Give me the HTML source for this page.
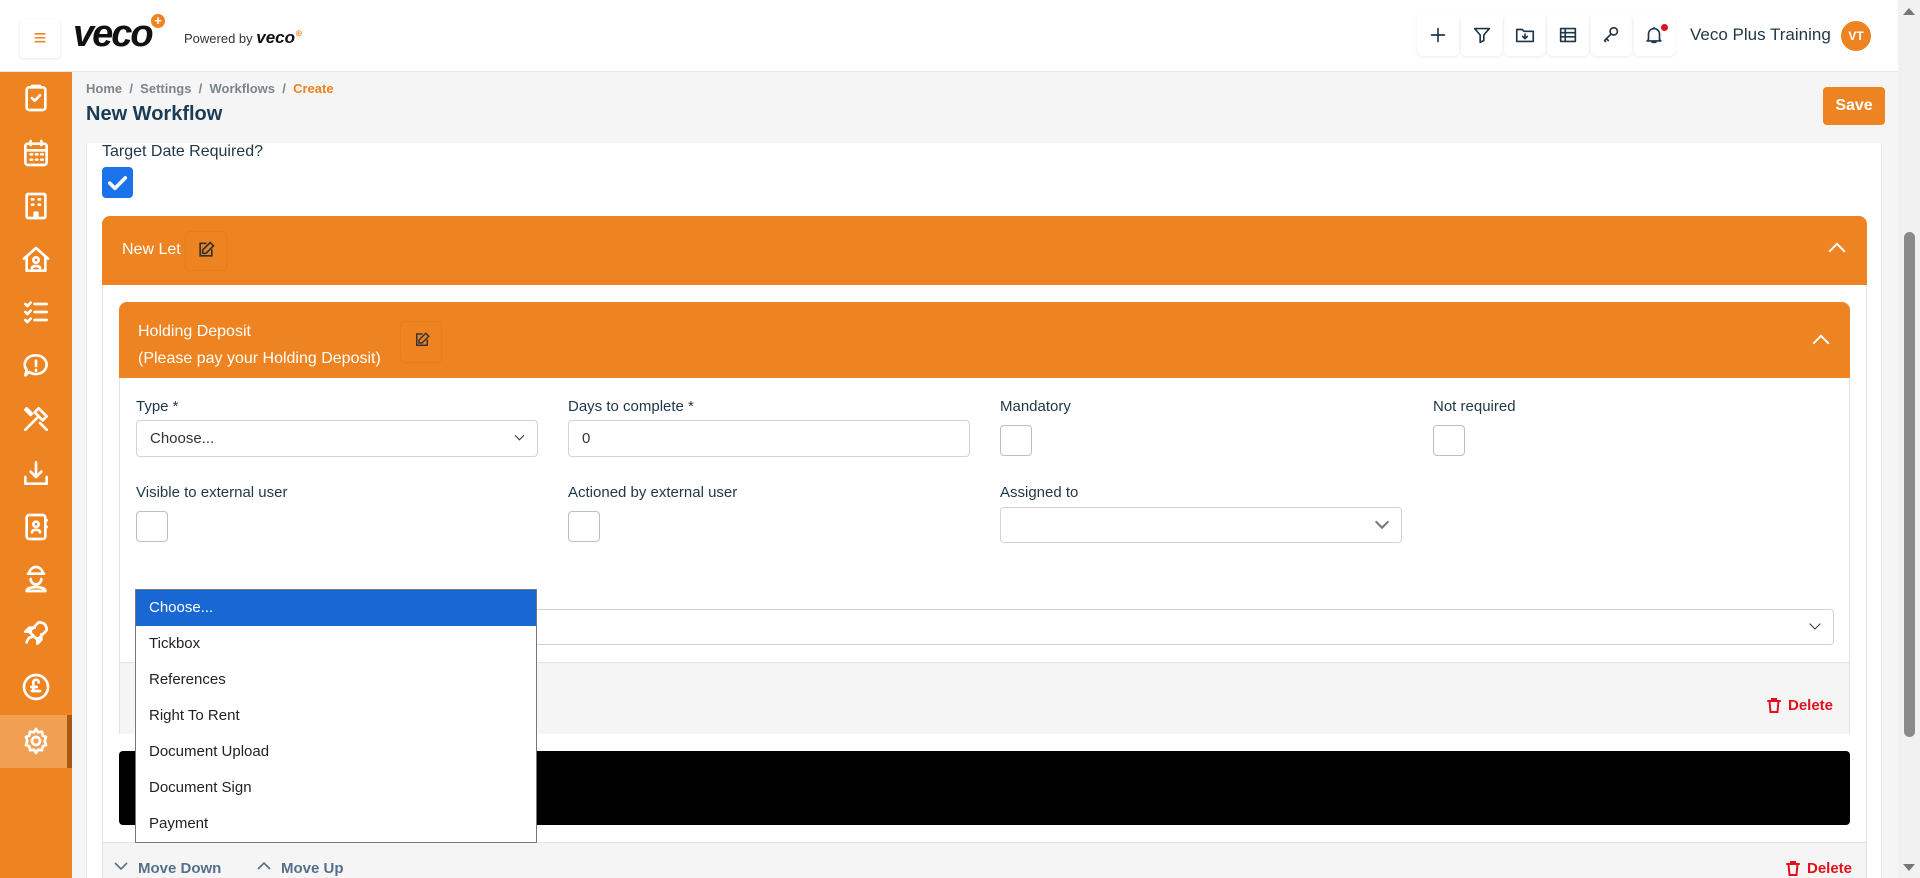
<!DOCTYPE html>
<html><head><meta charset="utf-8"><style>
*{box-sizing:border-box;margin:0;padding:0}
body{width:1920px;height:878px;overflow:hidden;background:#f5f5f5;font-family:"Liberation Sans",sans-serif;color:#1f3747;position:relative;font-size:15px}
.a{position:absolute}
.hdr{left:0;top:0;width:1898px;height:72px;background:#fff;border-bottom:1px solid #e8e8e8}
.side{left:0;top:72px;width:72px;height:806px;background:#ee8321}
.ic{position:absolute;left:20px;width:32px;height:32px}
.ic svg{width:32px;height:32px;fill:none;stroke:#fff;stroke-width:2;stroke-linecap:round;stroke-linejoin:round}
.tb{position:absolute;top:14px;width:42px;height:42px;border-radius:6px;box-shadow:0 1px 3px rgba(0,0,0,.08);display:flex;align-items:center;justify-content:center}
.tb svg{width:22px;height:22px;fill:none;stroke:#1f3747;stroke-width:1.8;stroke-linecap:round;stroke-linejoin:round}
.lbl{font-size:15px;color:#1f3747}
.inp{background:#fff;border:1px solid #cfd4d8;border-radius:4px}
.cb{background:#fff;border:1px solid #b9c0c6;border-radius:4px;width:32px;height:31px}
.chev{position:absolute;right:14px;top:12px;width:9px;height:9px;border-right:1.6px solid #333;border-bottom:1.6px solid #333;transform:rotate(45deg)}
.dd div{height:36px;line-height:36px;padding-left:13px;font-size:15px;color:#222}
.del{color:#e0101d;font-weight:bold;font-size:15px;display:flex;align-items:center;gap:6px}
.del svg{width:16px;height:17px;fill:none;stroke:#e0101d;stroke-width:2;stroke-linecap:round}
.mv{color:#55708a;font-weight:bold;font-size:15px}
</style></head><body>
<div class="a hdr">
  <div class="a" style="left:20px;top:20px;width:40px;height:38px;border-radius:4px;box-shadow:0 1px 3px rgba(0,0,0,.1);color:#ee8321;font-size:22px;text-align:center;line-height:36px">≡</div>
  <div class="a" style="left:73px;top:13px;font-size:38px;font-weight:bold;font-style:italic;color:#111;letter-spacing:-2px">veco</div>
  <div class="a" style="left:151px;top:14px;width:14px;height:14px;border-radius:50%;background:#ee8321;color:#fff;font-size:13px;line-height:14px;text-align:center;font-weight:bold">+</div>
  <div class="a" style="left:184px;top:28px;font-size:13px;color:#333">Powered by <b style="font-style:italic;font-size:17px;color:#111">veco</b><span style="color:#ee8321;font-size:9px;vertical-align:top">⊕</span></div>
  <div class="tb" style="left:1417px"><svg viewBox="0 0 24 24"><path d="M12 5v14M5 12h14"/></svg></div>
  <div class="tb" style="left:1461px"><svg viewBox="0 0 24 24"><path d="M4 5h16l-6 7v6l-4 2v-8z"/></svg></div>
  <div class="tb" style="left:1504px"><svg viewBox="0 0 24 24"><path d="M3 6h6l2 2h10v11H3z M12 11v5M9.5 13.5 12 16l2.5-2.5"/></svg></div>
  <div class="tb" style="left:1547px"><svg viewBox="0 0 24 24"><rect x="4" y="5" width="16" height="14"/><path d="M4 9.5h16M4 14h16M9 5v14"/></svg></div>
  <div class="tb" style="left:1590px"><svg viewBox="0 0 24 24"><circle cx="15" cy="8" r="4"/><path d="M12 11l-7 7M7 16l2 2M5 18l1 1"/></svg></div>
  <div class="tb" style="left:1633px"><svg viewBox="0 0 24 24"><path d="M6 17V11a6 6 0 0 1 12 0v6l1.5 1.5h-15zM10 20h4M12 4v1"/></svg></div>
  <div class="a" style="left:1661px;top:24px;width:7px;height:7px;border-radius:50%;background:#e0101d"></div>
  <div class="a" style="left:1690px;top:25px;font-size:17px;color:#1f3747">Veco Plus Training</div>
  <div class="a" style="left:1841px;top:21px;width:30px;height:30px;border-radius:50%;background:#ee8321;color:#fff;font-size:12px;font-weight:bold;text-align:center;line-height:30px">VT</div>
</div>
<div class="a" style="left:1898px;top:0;width:22px;height:878px;background:#f1f1f1"></div>
<div class="a" style="left:1904px;top:232px;width:11px;height:505px;border-radius:6px;background:#8a8a8a"></div>
<div class="a" style="left:1903px;top:8px;width:0;height:0;border-left:6px solid transparent;border-right:6px solid transparent;border-bottom:7px solid #777"></div>
<div class="a" style="left:1903px;top:864px;width:0;height:0;border-left:6px solid transparent;border-right:6px solid transparent;border-top:7px solid #777"></div>

<div class="a side">
  <div class="a" style="left:0;top:643px;width:72px;height:53px;background:#f19f52;border-right:5px solid #a85a14"></div>
  <div class="ic" style="top:10px"><svg viewBox="0 0 24 24"><rect x="5" y="4" width="14" height="17" rx="2"/><path d="M9 4V3h6v1M9 12l2 2 4-4"/></svg></div>
  <div class="ic" style="top:65px"><svg viewBox="0 0 24 24"><rect x="4" y="5" width="16" height="16" rx="2"/><path d="M4 10h16M8 3v3M16 3v3M8 13h1M12 13h1M16 13h1M8 17h1M12 17h1M16 17h1"/></svg></div>
  <div class="ic" style="top:118px"><svg viewBox="0 0 24 24"><rect x="5" y="3" width="14" height="18" rx="1"/><path d="M9 7h1M14 7h1M9 11h1M14 11h1M11 21v-4h2v4"/></svg></div>
  <div class="ic" style="top:172px"><svg viewBox="0 0 24 24"><path d="M3 11l9-8 9 8M5 10v10h14V10"/><circle cx="12" cy="12" r="2"/><path d="M9 18c0-2 6-2 6 0"/></svg></div>
  <div class="ic" style="top:224px"><svg viewBox="0 0 24 24"><path d="M4 6l1.5 1.5L8 5M4 12l1.5 1.5L8 11M4 18l1.5 1.5L8 17M11 6h9M11 12h9M11 18h9"/></svg></div>
  <div class="ic" style="top:278px"><svg viewBox="0 0 24 24"><path d="M12 4a8 7 0 1 1-5 12.5L4 19l1-4A8 7 0 0 1 12 4zM12 8v4M12 15v.5"/></svg></div>
  <div class="ic" style="top:331px"><svg viewBox="0 0 24 24"><path d="M4 20l9-9M14 4l6 6-3 3-6-6zM5 4l4 4M4 5l4 4M15 15l5 5"/></svg></div>
  <div class="ic" style="top:385px"><svg viewBox="0 0 24 24"><path d="M12 4v11M8 11l4 4 4-4M4 15v5h16v-5"/></svg></div>
  <div class="ic" style="top:439px"><svg viewBox="0 0 24 24"><rect x="5" y="3" width="14" height="18" rx="2"/><circle cx="12" cy="10" r="2"/><path d="M9 16c0-2.5 6-2.5 6 0M19 7h1M19 12h1"/></svg></div>
  <div class="ic" style="top:491px"><svg viewBox="0 0 24 24"><path d="M7 8a5 5 0 0 1 10 0zM6 8h12M8 12a4 4 0 0 0 8 0M5 21c0-4 14-4 14 0z"/></svg></div>
  <div class="ic" style="top:545px"><svg viewBox="0 0 24 24"><path d="M5 19c1-3 2-4 4-4M14 4c4 0 6 2 6 6l-7 7-6-6z M8 11H4l3-3h4M13 16v4l3-3v-4"/></svg></div>
  <div class="ic" style="top:599px"><svg viewBox="0 0 24 24"><circle cx="12" cy="12" r="9"/><path d="M14 8.5a2 2 0 0 0-4 0V15M8.5 12h4M9 15h6"/></svg></div>
  <div class="ic" style="top:653px"><svg viewBox="0 0 24 24"><circle cx="12" cy="12" r="3"/><path d="M12 3l1.5 2.5 3-.5.5 3L19.5 9l-1 3 1 3-2.5 1-.5 3-3-.5L12 21l-1.5-2.5-3 .5-.5-3L4.5 15l1-3-1-3L7 8l.5-3 3 .5z"/></svg></div>
</div>

<div class="a" style="left:86px;top:81px;font-size:13px;font-weight:bold;color:#7b858c">Home &nbsp;/ &nbsp;Settings &nbsp;/ &nbsp;Workflows &nbsp;/ &nbsp;<span style="color:#ee8321">Create</span></div>
<div class="a" style="left:86px;top:103px;font-size:20px;font-weight:bold;color:#1b3c55">New Workflow</div>
<div class="a" style="left:1823px;top:87px;width:62px;height:38px;border-radius:4px;background:#ee8321;color:#fff;font-weight:bold;font-size:16px;text-align:center;line-height:38px">Save</div>

<div class="a" style="left:86px;top:143px;width:1796px;height:735px;background:#fff;border-left:1px solid #e6e6e6;border-right:1px solid #e6e6e6"></div>
<div class="a lbl" style="left:102px;top:143px;font-size:16px">Target Date Required?</div>
<div class="a" style="left:102px;top:167px;width:31px;height:31px;border-radius:4px;background:#1a73e8"><svg viewBox="0 0 24 24" width="31" height="31"><path d="M6 12.5l4 4 8-8" fill="none" stroke="#fff" stroke-width="2.8" stroke-linecap="round" stroke-linejoin="round"/></svg></div>

<div class="a" style="left:102px;top:216px;width:1765px;height:662px;border:1px solid #e3e3e3;border-radius:8px 8px 0 0;background:#fff"></div>
<div class="a" style="left:102px;top:216px;width:1765px;height:69px;background:#ee8321;border-radius:8px 8px 0 0"></div>
<div class="a" style="left:122px;top:241px;color:#fff;font-size:16px">New Let</div>
<div class="a" style="left:186px;top:232px;width:40px;height:38px;border-radius:4px;box-shadow:0 0 2px rgba(0,0,0,.12)"></div>
<svg class="a" style="left:196px;top:240px" width="20" height="20" viewBox="0 0 24 24" fill="none" stroke="#333" stroke-width="2" stroke-linecap="round"><path d="M12 4H5v15h14v-7M17 3l4 4-9 9H8v-4z"/></svg>
<div class="a" style="left:1831px;top:245px;width:12px;height:12px;border-left:2px solid #fff;border-top:2px solid #fff;transform:rotate(45deg)"></div>

<div class="a" style="left:119px;top:302px;width:1731px;height:432px;border:1px solid #e3e3e3;border-radius:8px 8px 0 0"></div>
<div class="a" style="left:119px;top:302px;width:1731px;height:76px;background:#ee8321;border-radius:8px 8px 0 0"></div>
<div class="a" style="left:138px;top:318px;color:#fff;font-size:16px;line-height:27px">Holding Deposit<br>(Please pay your Holding Deposit)</div>
<div class="a" style="left:401px;top:322px;width:40px;height:40px;border-radius:4px;box-shadow:0 0 2px rgba(0,0,0,.12)"></div>
<svg class="a" style="left:413px;top:331px" width="18" height="18" viewBox="0 0 24 24" fill="none" stroke="#333" stroke-width="2" stroke-linecap="round"><path d="M12 4H5v15h14v-7M17 3l4 4-9 9H8v-4z"/></svg>
<div class="a" style="left:1815px;top:337px;width:12px;height:12px;border-left:2px solid #fff;border-top:2px solid #fff;transform:rotate(45deg)"></div>

<div class="a lbl" style="left:136px;top:398px">Type *</div>
<div class="a inp" style="left:136px;top:420px;width:402px;height:37px"><span class="a" style="left:13px;top:9px;color:#333">Choose...</span><div class="chev" style="top:11px;width:7px;height:7px"></div></div>
<div class="a lbl" style="left:568px;top:398px">Days to complete *</div>
<div class="a inp" style="left:568px;top:420px;width:402px;height:37px"><span class="a" style="left:13px;top:9px;color:#333">0</span></div>
<div class="a lbl" style="left:1000px;top:398px">Mandatory</div>
<div class="a cb" style="left:1000px;top:425px"></div>
<div class="a lbl" style="left:1433px;top:398px">Not required</div>
<div class="a cb" style="left:1433px;top:425px"></div>

<div class="a lbl" style="left:136px;top:484px">Visible to external user</div>
<div class="a cb" style="left:136px;top:511px"></div>
<div class="a lbl" style="left:568px;top:484px">Actioned by external user</div>
<div class="a cb" style="left:568px;top:511px"></div>
<div class="a lbl" style="left:1000px;top:484px">Assigned to</div>
<div class="a inp" style="left:1000px;top:507px;width:402px;height:36px"><div class="chev" style="width:10px;height:10px;top:9px;border-color:#777;border-width:2.5px"></div></div>

<div class="a inp" style="left:136px;top:609px;width:1698px;height:36px"><div class="chev" style="width:8px;height:8px;top:10px"></div></div>

<div class="a" style="left:120px;top:662px;width:1729px;height:72px;background:#f5f5f5;border-top:1px solid #e3e3e3"></div>
<div class="a del" style="left:1766px;top:697px"><svg viewBox="0 0 16 17"><path d="M2 4h12M6 4V2h4v2M3.5 4l1 11h7l1-11"/></svg>Delete</div>

<div class="a" style="left:119px;top:751px;width:1731px;height:74px;background:#000;border-radius:4px"></div>

<div class="a" style="left:103px;top:842px;width:1763px;height:36px;background:#f5f5f5;border-top:1px solid #e3e3e3"></div>
<svg class="a" style="left:114px;top:861px" width="14" height="10" viewBox="0 0 14 10" fill="none" stroke="#55708a" stroke-width="1.6"><path d="M1 2l6 6 6-6"/></svg>
<div class="a mv" style="left:138px;top:860px">Move Down</div>
<svg class="a" style="left:257px;top:861px" width="14" height="10" viewBox="0 0 14 10" fill="none" stroke="#55708a" stroke-width="1.6"><path d="M1 8l6-6 6 6"/></svg>
<div class="a mv" style="left:281px;top:860px">Move Up</div>
<div class="a del" style="left:1785px;top:860px"><svg viewBox="0 0 16 17"><path d="M2 4h12M6 4V2h4v2M3.5 4l1 11h7l1-11"/></svg>Delete</div>

<div class="a dd" style="left:135px;top:589px;width:402px;height:254px;background:#fff;border:1px solid #777">
  <div style="background:#1967d2;color:#fff">Choose...</div>
  <div>Tickbox</div><div>References</div><div>Right To Rent</div><div>Document Upload</div><div>Document Sign</div><div>Payment</div>
</div>
</body></html>
